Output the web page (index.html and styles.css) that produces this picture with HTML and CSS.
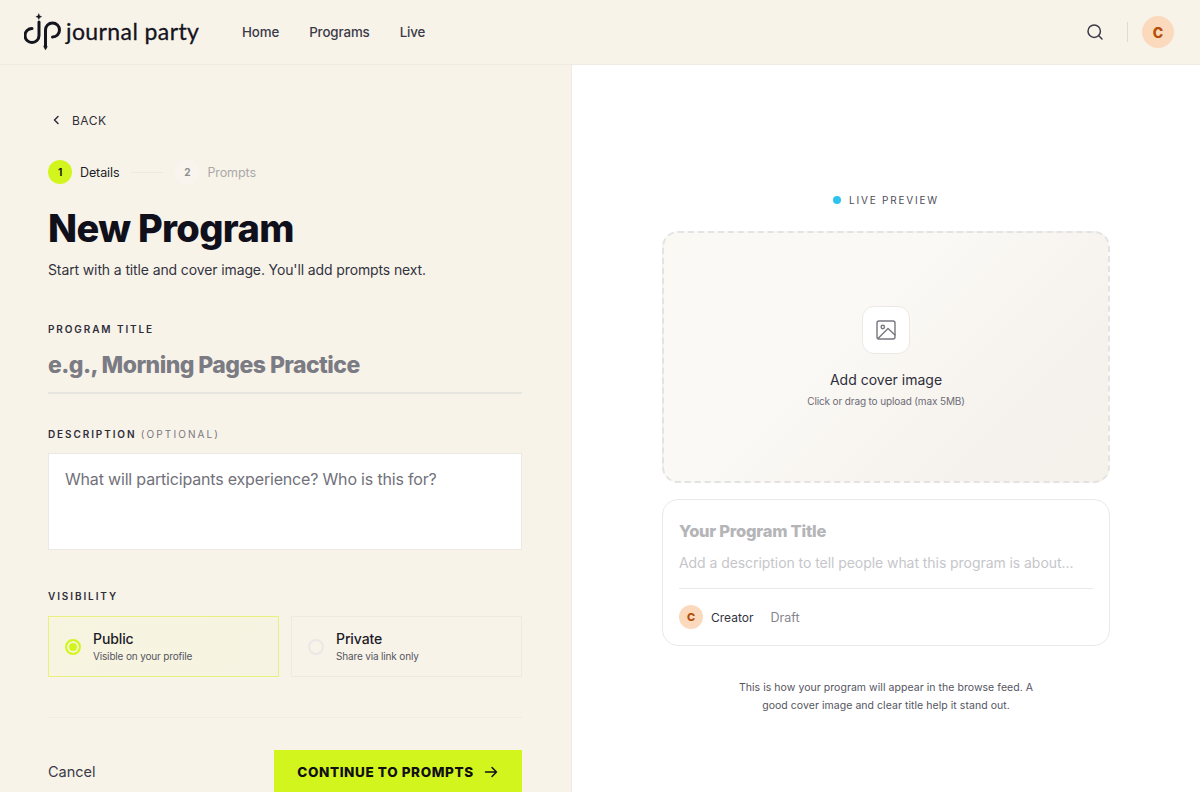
FILE: index.html
```html
<!DOCTYPE html>
<html lang="en">
<head>
    <meta charset="UTF-8">
    <title>Journal Party - New Program</title>
    <link rel="stylesheet" href="styles.css">
</head>
<body>

    <header class="topbar">
        <a class="logo" href="#">
            <svg class="logo-mark" width="38" height="38" viewBox="0 0 38 38" fill="none" stroke="#14141f" stroke-width="3" stroke-linecap="round">
                <path d="M15 9V22.500a7 7 0 1 1-7-7"/>
                <path d="M21.500 33V17a7 7 0 1 1 7 7"/>
                <path d="M14.800 0.800l0.900 2 2 0.900-2 0.900-0.900 2-0.900-2-2-0.900 2-0.900z" fill="#14141f" stroke-width="0.400"/>
                <path d="M21.500 31l1.800 2.700-1.800 3.300-1.800-3.300z" fill="#14141f" stroke-width="0.400"/>
            </svg>
            <span class="logo-text">journal party</span>
        </a>
        <nav class="menu">
            <a href="#">Home</a>
            <a href="#">Programs</a>
            <a href="#">Live</a>
        </nav>
        <div class="topbar-right">
            <svg width="18" height="18" viewBox="0 0 18 18" fill="none" stroke="#3a3a48" stroke-width="1.500" stroke-linecap="round">
                <circle cx="8.200" cy="8.200" r="6.200"/>
                <path d="M12.800 12.800l3.200 3.200"/>
            </svg>
            <span class="topbar-sep"></span>
            <span class="avatar">C</span>
        </div>
    </header>

    <main class="page">
        <section class="form-side">
            <a class="back" href="#">
                <svg width="16" height="16" viewBox="0 0 16 16" fill="none" stroke="#2e2e3a" stroke-width="1.500" stroke-linecap="round" stroke-linejoin="round">
                    <path d="M10 4.500L6.500 8l3.500 3.500"/>
                </svg>
                BACK
            </a>

            <div class="steps">
                <span class="step-num active">1</span>
                <span class="step-label active">Details</span>
                <span class="step-line"></span>
                <span class="step-num">2</span>
                <span class="step-label">Prompts</span>
            </div>

            <h1>New Program</h1>
            <p class="intro">Start with a title and cover image. You'll add prompts next.</p>

            <div class="label title-label">PROGRAM TITLE</div>
            <div class="title-input">e.g., Morning Pages Practice</div>

            <div class="label desc-label">DESCRIPTION <span class="optional">(OPTIONAL)</span></div>
            <div class="desc-input">What will participants experience? Who is this for?</div>

            <div class="label vis-label">VISIBILITY</div>
            <div class="vis-options">
                <div class="vis-card selected">
                    <span class="radio on"></span>
                    <div>
                        <div class="vis-name">Public</div>
                        <div class="vis-note">Visible on your profile</div>
                    </div>
                </div>
                <div class="vis-card">
                    <span class="radio"></span>
                    <div>
                        <div class="vis-name">Private</div>
                        <div class="vis-note">Share via link only</div>
                    </div>
                </div>
            </div>

            <div class="actions">
                <a class="cancel" href="#">Cancel</a>
                <button class="continue">
                    CONTINUE TO PROMPTS
                    <svg width="16" height="16" viewBox="0 0 16 16" fill="none" stroke="#0f0f14" stroke-width="1.500" stroke-linecap="round" stroke-linejoin="round">
                        <path d="M2.500 8h11M9 3.500L13.500 8 9 12.500"/>
                    </svg>
                </button>
            </div>
        </section>

        <section class="preview-side">
            <div class="preview">
                <div class="live"><span class="live-dot"></span>LIVE PREVIEW</div>

                <div class="cover">
                    <span class="cover-icon">
                        <svg width="22" height="22" viewBox="0 0 22 22" fill="none" stroke="#77777f" stroke-width="1.400" stroke-linecap="round" stroke-linejoin="round">
                            <rect x="2" y="2" width="18" height="18" rx="2"/>
                            <circle cx="7.800" cy="8" r="1.700"/>
                            <path d="M3 19.500L13 9.500l7 6.500"/>
                        </svg>
                    </span>
                    <div class="cover-title">Add cover image</div>
                    <div class="cover-note">Click or drag to upload (max 5MB)</div>
                </div>

                <div class="card">
                    <div class="card-title">Your Program Title</div>
                    <div class="card-desc">Add a description to tell people what this program is about...</div>
                    <div class="card-foot">
                        <span class="avatar small">C</span>
                        <span class="creator">Creator</span>
                        <span class="draft">Draft</span>
                    </div>
                </div>

                <p class="preview-note">This is how your program will appear in the browse feed. A good cover image and clear title help it stand out.</p>
            </div>
        </section>
    </main>

</body>
</html>
```

FILE: styles.css
```css
* {
    margin: 0;
    padding: 0;
    box-sizing: border-box;
}
html, body {
    height: 792px;
    overflow: hidden;
}
body {
    background: #fff;
    font-family: Inter, "Liberation Sans", sans-serif;
    color: #14141f;
}
a {
    color: inherit;
    text-decoration: none;
}

/* top bar */
.topbar {
    height: 65px;
    display: flex;
    align-items: center;
    padding: 0 26px 0 24px;
    background: #f8f3e9;
    border-bottom: 1px solid #f0ebe2;
}
.logo {
    display: flex;
    align-items: center;
    gap: 4px;
    width: 218px;
}
.logo-text {
    font-family: Lato, sans-serif;
    font-size: 23px;
    font-weight: 400;
    letter-spacing: 0.4px;
    white-space: nowrap;
    margin-top: -3px;
    -webkit-text-stroke: 0.3px #14141f;
}
.menu {
    display: flex;
    gap: 30px;
    font-size: 13.300px;
    font-weight: 500;
    letter-spacing: -0.1px;
    color: #3a3a48;
}
.topbar-right {
    margin-left: auto;
    display: flex;
    align-items: center;
}
.topbar-sep {
    width: 1px;
    height: 20px;
    margin: 0 14px 0 23px;
    background: #dedbd2;
}
.avatar {
    width: 32px;
    height: 32px;
    border-radius: 50%;
    display: flex;
    align-items: center;
    justify-content: center;
    background: #fbd9bd;
    color: #b24e08;
    font-size: 14px;
    font-weight: 800;
}
.avatar.small {
    width: 24px;
    height: 24px;
    font-size: 11px;
}

/* page */
.page {
    display: flex;
    height: 727px;
}
.form-side {
    width: 572px;
    flex: none;
    padding: 46px 49px 0 48px;
    background: #f8f3e9;
    border-right: 1px solid #f0ebe2;
}
.preview-side {
    flex: 1;
    display: flex;
    justify-content: center;
    padding-top: 128px;
}
.preview {
    width: 448px;
}

/* left form */
.back {
    display: flex;
    align-items: center;
    gap: 8px;
    height: 18px;
    font-size: 12px;
    letter-spacing: 0.5px;
    color: #2e2e3a;
}
.steps {
    display: flex;
    align-items: center;
    margin-top: 31px;
    height: 24px;
    font-size: 12.500px;
    letter-spacing: -0.1px;
}
.step-num {
    width: 24px;
    height: 24px;
    border-radius: 50%;
    display: flex;
    align-items: center;
    justify-content: center;
    font-size: 10px;
    font-weight: 700;
    color: #8d8d90;
    background: #f9f5ee;
}
.step-num.active {
    background: #d3f51e;
    color: #14141f;
}
.step-label {
    margin-left: 8px;
    color: #a9a8a8;
}
.step-label.active {
    color: #1c1c28;
}
.step-line {
    width: 32px;
    height: 1px;
    margin: 0 12px;
    background: #ede9e0;
}
h1 {
    margin-top: 20px;
    font-size: 38px;
    line-height: 48px;
    font-weight: 800;
    letter-spacing: -0.650px;
    color: #10101c;
}
.intro {
    margin-top: 8px;
    font-size: 14px;
    line-height: 20px;
    letter-spacing: -0.120px;
    color: #33333f;
}
.label {
    font-size: 10px;
    line-height: 14px;
    font-weight: 600;
    letter-spacing: 1.900px;
    color: #2e2e3a;
}
.title-label {
    margin-top: 42px;
}
.title-input {
    height: 58px;
    padding-top: 13px;
    font-size: 23px;
    line-height: 32px;
    font-weight: 800;
    letter-spacing: -0.550px;
    color: #7b7b84;
    border-bottom: 2px solid #e7e5e0;
}
.desc-label {
    margin-top: 33px;
}
.optional {
    font-weight: 400;
    letter-spacing: 2.100px;
    color: #77777f;
}
.desc-input {
    height: 97px;
    margin-top: 12px;
    padding: 14px 16px;
    background: #fff;
    border: 1px solid #ebe8e2;
    font-size: 16px;
    line-height: 22px;
    letter-spacing: -0.180px;
    color: #71717a;
}
.vis-label {
    margin-top: 39px;
}
.vis-options {
    display: grid;
    grid-template-columns: 1fr 1fr;
    gap: 12px;
    margin-top: 13px;
}
.vis-card {
    height: 61px;
    display: flex;
    align-items: center;
    gap: 12px;
    padding: 0 16px;
    border: 1px solid #eeeae3;
}
.vis-card.selected {
    background: linear-gradient(120deg, #f7f4e0, #f6f3e2);
    border-color: #e9f080;
}
.radio {
    width: 16px;
    height: 16px;
    flex: none;
    border-radius: 50%;
    border: 2px solid #e9e8e6;
}
.radio.on {
    border-color: #d3f51e;
    background: #d3f51e;
    box-shadow: inset 0 0 0 2px #f7f5dd;
}
.vis-name {
    font-size: 14px;
    line-height: 18px;
    font-weight: 500;
    letter-spacing: -0.100px;
    color: #1c1c28;
}
.vis-note {
    margin-top: 1px;
    font-size: 10px;
    line-height: 14px;
    letter-spacing: -0.160px;
    color: #55555f;
}
.actions {
    display: flex;
    align-items: flex-start;
    justify-content: space-between;
    margin-top: 40px;
    padding-top: 32px;
    border-top: 1px solid #f0ece5;
}
.cancel {
    margin-top: 12px;
    font-size: 14.500px;
    line-height: 20px;
    color: #3a3a48;
}
.continue {
    width: 248px;
    height: 56px;
    display: flex;
    align-items: center;
    justify-content: center;
    gap: 9px;
    padding-bottom: 13px;
    border: none;
    background: #d3f51e;
    color: #0f0f14;
    font-family: inherit;
    font-size: 13.500px;
    font-weight: 800;
    letter-spacing: 0.600px;
    cursor: pointer;
}

/* right preview */
.live {
    display: flex;
    align-items: center;
    justify-content: center;
    gap: 8px;
    height: 14px;
    font-size: 10px;
    letter-spacing: 1.800px;
    color: #4e4e58;
}
.live-dot {
    width: 8px;
    height: 8px;
    border-radius: 50%;
    background: #2dc3ee;
}
.cover {
    height: 252px;
    margin-top: 24px;
    padding-top: 73px;
    display: flex;
    flex-direction: column;
    align-items: center;
    border: 2px dashed #e3e3e3;
    border-radius: 16px;
    background: linear-gradient(135deg, #fbf9f4 0%, #fbf9f5 40%, #f5f1ec 80%, #f5f2ec 100%);
}
.cover-icon {
    width: 48px;
    height: 48px;
    display: flex;
    align-items: center;
    justify-content: center;
    background: #fff;
    border: 1px solid #ece9e4;
    border-radius: 12px;
}
.cover-title {
    margin-top: 16px;
    font-size: 14px;
    line-height: 20px;
    color: #2e2e3a;
}
.cover-note {
    margin-top: 4px;
    font-size: 10px;
    line-height: 14px;
    letter-spacing: -0.130px;
    color: #6c6c75;
}
.card {
    height: 147px;
    margin-top: 16px;
    padding: 20px 16px 0;
    border: 1px solid #e9e9ea;
    border-radius: 16px;
}
.card-title {
    font-size: 16.500px;
    line-height: 22px;
    font-weight: 800;
    letter-spacing: -0.250px;
    color: #b5b5b8;
}
.card-desc {
    margin-top: 11px;
    font-size: 14px;
    line-height: 20px;
    letter-spacing: -0.060px;
    white-space: nowrap;
    color: #c6c6ca;
}
.card-foot {
    display: flex;
    align-items: center;
    margin-top: 15px;
    padding-top: 16px;
    border-top: 1px solid #e9e9ea;
    font-size: 12px;
}
.creator {
    margin-left: 8px;
    color: #33333f;
}
.draft {
    margin-left: 17px;
    font-size: 12.500px;
    color: #85858d;
}
.preview-note {
    width: 300px;
    margin: 33px auto 0;
    text-align: center;
    font-size: 10.500px;
    line-height: 18px;
    letter-spacing: 0.050px;
    color: #55555f;
}
```
